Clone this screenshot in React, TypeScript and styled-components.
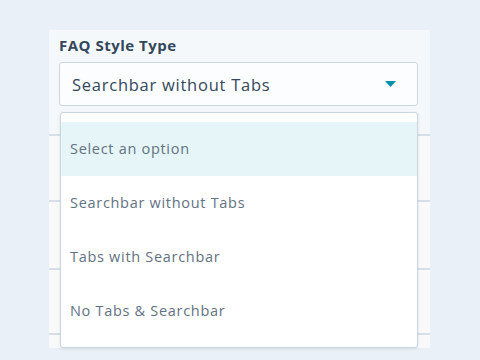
import React from "react";
import styled, { createGlobalStyle } from "styled-components";

const Global = createGlobalStyle`
  html, body { margin: 0; padding: 0; background: #eaf0f8; }
  body { font-family: "Open Sans", "Liberation Sans", sans-serif; width: 480px; height: 360px; overflow: hidden; }
`;

const Page = styled.div`
  width: 480px;
  height: 360px;
  padding: 30px 50px 12px 49px;
  box-sizing: border-box;
  position: relative;
`;

const Panel = styled.div`
  width: 381px;
  height: 318px;
  background: #f5f8fa;
  display: flex;
  flex-direction: column;
  overflow: hidden;
`;

const Header = styled.div`
  padding: 5px 12px 0 10px;
  height: 104px;
  flex-shrink: 0;
  box-sizing: border-box;
  display: flex;
  flex-direction: column;
`;

const Label = styled.div`
  font-family: "Open Sans", "Liberation Sans", sans-serif;
  font-weight: 700;
  font-size: 15px;
  letter-spacing: 0.5px;
  color: #33475b;
  line-height: 20px;
  margin-bottom: 7px;
`;

const Select = styled.div`
  height: 44px;
  box-sizing: border-box;
  border: 1px solid #cbd6e2;
  border-radius: 3px;
  background: #fcfdfe;
  display: flex;
  align-items: center;
  justify-content: space-between;
  padding: 0 21px 0 12px;
  font-size: 16.5px;
  letter-spacing: 0.75px;
  color: #33475b;
`;

const Caret = styled.svg`
  width: 11px;
  height: 6px;
  display: block;
`;

const Row = styled.div<{ $h?: number }>`
  height: ${(p) => (p.$h ? `${p.$h}px` : "auto")};
  flex: ${(p) => (p.$h ? "0 0 auto" : "1 1 auto")};
  box-sizing: border-box;
  border-top: 2px solid #d6dfe9;
  background: #f9f9fa;
`;

const Menu = styled.div`
  position: absolute;
  left: 60px;
  top: 112px;
  width: 358px;
  height: 236px;
  box-sizing: border-box;
  background: #ffffff;
  border: 1px solid #cbd6e2;
  border-radius: 3px;
  box-shadow: 0 1px 3px rgba(45, 62, 80, 0.12);
  padding: 9px 0 10px;
  display: flex;
  flex-direction: column;
`;

const Option = styled.div<{ $active?: boolean }>`
  height: 54px;
  display: flex;
  align-items: center;
  padding: 0 9px;
  font-size: 14.5px;
  letter-spacing: 0.7px;
  color: #637282;
  background: ${(p) => (p.$active ? "#e5f5f8" : "transparent")};
`;

const options = [
  "Select an option",
  "Searchbar without Tabs",
  "Tabs with Searchbar",
  "No Tabs & Searchbar",
];

export default function App() {
  return (
    <>
      <Global />
      <Page>
        <Panel>
          <Header>
            <Label>FAQ Style Type</Label>
            <Select>
              <span>Searchbar without Tabs</span>
              <Caret viewBox="0 0 11 6">
                <path d="M0 0 L11 0 L5.5 6 Z" fill="#0091ae" />
              </Caret>
            </Select>
          </Header>
          <Row $h={66} />
          <Row $h={68} />
          <Row $h={65} />
          <Row />
        </Panel>
        <Menu>
          {options.map((o, i) => (
            <Option key={o} $active={i === 0}>
              {o}
            </Option>
          ))}
        </Menu>
      </Page>
    </>
  );
}
